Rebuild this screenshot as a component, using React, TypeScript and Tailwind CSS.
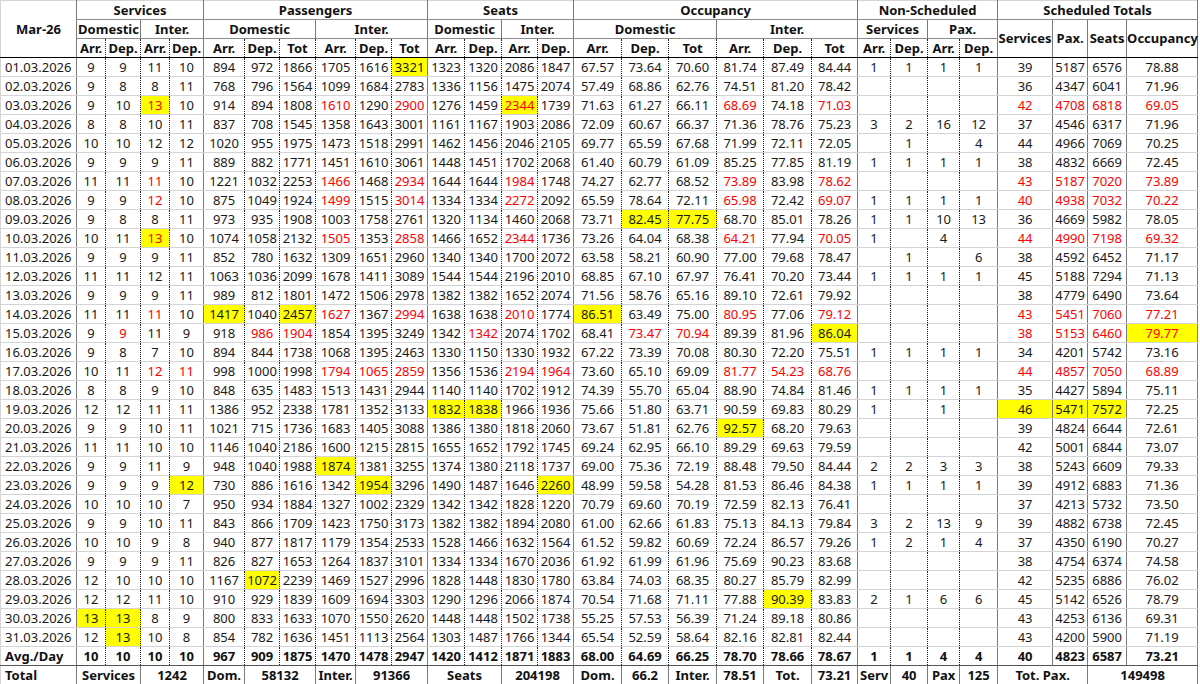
import React from "react";

const W = [76,29,35,29,34,41,35,36,40,36,36,37,37,36,36,48,47,48,47,48,46,33,37,32,38,55,35,39,71];
const GROUP_END = new Set([0,4,10,14,20,24,25,26,27,28]);

const raw = `01|9,9,11,10|894,972,1866,1705,1616,y3321|1323,1320,2086,1847|67.57,73.64,70.60,81.74,87.49,84.44|1,1,1,1|39,5187,6576,78.88
02|9,8,8,11|768,796,1564,1099,1684,2783|1336,1156,1475,2074|57.49,68.86,62.76,74.51,81.20,78.42|,,,|36,4347,6041,71.96
03|9,10,yr13,10|914,894,1808,r1610,1290,r2900|1276,1459,yr2344,1739|71.63,61.27,66.11,r68.69,74.18,r71.03|,,,|r42,r4708,r6818,r69.05
04|8,8,10,11|837,708,1545,1358,1643,3001|1161,1167,1903,2086|72.09,60.67,66.37,71.36,78.76,75.23|3,2,16,12|37,4546,6317,71.96
05|10,10,12,12|1020,955,1975,1473,1518,2991|1462,1456,2046,2105|69.77,65.59,67.68,71.99,72.11,72.05|,1,,4|44,4966,7069,70.25
06|9,9,9,11|889,882,1771,1451,1610,3061|1448,1451,1702,2068|61.40,60.79,61.09,85.25,77.85,81.19|1,1,1,1|38,4832,6669,72.45
07|11,11,r11,10|1221,1032,2253,r1466,1468,r2934|1644,1644,r1984,1748|74.27,62.77,68.52,r73.89,83.98,r78.62|,,,|r43,r5187,r7020,r73.89
08|9,9,r12,10|875,1049,1924,r1499,1515,r3014|1334,1334,r2272,2092|65.59,78.64,72.11,r65.98,72.42,r69.07|1,1,1,1|r40,r4938,r7032,r70.22
09|9,8,8,11|973,935,1908,1003,1758,2761|1320,1134,1460,2068|73.71,y82.45,y77.75,68.70,85.01,78.26|1,1,10,13|36,4669,5982,78.05
10|10,11,yr13,10|1074,1058,2132,r1505,1353,r2858|1466,1652,r2344,1736|73.26,64.04,68.38,r64.21,77.94,r70.05|1,,4,|r44,r4990,r7198,r69.32
11|9,9,9,11|852,780,1632,1309,1651,2960|1340,1340,1700,2072|63.58,58.21,60.90,77.00,79.68,78.47|,1,,6|38,4592,6452,71.17
12|11,11,12,11|1063,1036,2099,1678,1411,3089|1544,1544,2196,2010|68.85,67.10,67.97,76.41,70.20,73.44|1,1,1,1|45,5188,7294,71.13
13|9,9,9,11|989,812,1801,1472,1506,2978|1382,1382,1652,2074|71.56,58.76,65.16,89.10,72.61,79.92|,,,|38,4779,6490,73.64
14|11,11,r11,10|y1417,1040,y2457,r1627,1367,r2994|1638,1638,r2010,1774|y86.51,63.49,75.00,r80.95,77.06,r79.12|,,,|r43,r5451,r7060,r77.21
15|9,r9,11,9|918,r986,r1904,1854,1395,3249|1342,r1342,2074,1702|68.41,r73.47,r70.94,89.39,81.96,y86.04|,,,|r38,r5153,r6460,yr79.77
16|9,8,7,10|894,844,1738,1068,1395,2463|1330,1150,1330,1932|67.22,73.39,70.08,80.30,72.20,75.51|1,1,1,1|34,4201,5742,73.16
17|10,11,r12,r11|998,1000,1998,r1794,r1065,r2859|1356,1536,r2194,r1964|73.60,65.10,69.09,r81.77,r54.23,r68.76|,,,|r44,r4857,r7050,r68.89
18|8,8,9,10|848,635,1483,1513,1431,2944|1140,1140,1702,1912|74.39,55.70,65.04,88.90,74.84,81.46|1,1,1,1|35,4427,5894,75.11
19|12,12,11,11|1386,952,2338,1781,1352,3133|y1832,y1838,1966,1936|75.66,51.80,63.71,90.59,69.83,80.29|1,,1,|y46,y5471,y7572,72.25
20|9,9,10,11|1021,715,1736,1683,1405,3088|1386,1380,1818,2060|73.67,51.81,62.76,y92.57,68.20,79.63|,,,|39,4824,6644,72.61
21|11,11,10,10|1146,1040,2186,1600,1215,2815|1655,1652,1792,1745|69.24,62.95,66.10,89.29,69.63,79.59|,,,|42,5001,6844,73.07
22|9,9,11,9|948,1040,1988,y1874,1381,3255|1374,1380,2118,1737|69.00,75.36,72.19,88.48,79.50,84.44|2,2,3,3|38,5243,6609,79.33
23|9,9,9,y12|730,886,1616,1342,y1954,3296|1490,1487,1646,y2260|48.99,59.58,54.28,81.53,86.46,84.38|1,1,1,1|39,4912,6883,71.36
24|10,10,10,7|950,934,1884,1327,1002,2329|1342,1342,1828,1220|70.79,69.60,70.19,72.59,82.13,76.41|,,,|37,4213,5732,73.50
25|9,9,10,11|843,866,1709,1423,1750,3173|1382,1382,1894,2080|61.00,62.66,61.83,75.13,84.13,79.84|3,2,13,9|39,4882,6738,72.45
26|10,10,9,8|940,877,1817,1179,1354,2533|1528,1466,1632,1564|61.52,59.82,60.69,72.24,86.57,79.26|1,2,1,4|37,4350,6190,70.27
27|9,9,9,11|826,827,1653,1264,1837,3101|1334,1334,1670,2036|61.92,61.99,61.96,75.69,90.23,83.68|,,,|38,4754,6374,74.58
28|12,10,10,10|1167,y1072,2239,1469,1527,2996|1828,1448,1830,1780|63.84,74.03,68.35,80.27,85.79,82.99|,,,|42,5235,6886,76.02
29|12,12,11,10|910,929,1839,1609,1694,3303|1290,1296,2066,1874|70.54,71.68,71.11,77.88,y90.39,83.83|2,1,6,6|45,5142,6526,78.79
30|y13,y13,8,9|800,833,1633,1070,1550,2620|1448,1448,1502,1738|55.25,57.53,56.39,71.24,89.18,80.86|,,,|43,4253,6136,69.31
31|12,y13,10,8|854,782,1636,1451,1113,2564|1303,1487,1766,1344|65.54,52.59,58.64,82.16,82.81,82.44|,,,|43,4200,5900,71.19`;

const rows = raw.split("\n").map((l) => {
  const [d, ...groups] = l.split("|");
  return { date: `${d}.03.2026`, cells: groups.join(",").split(",") };
});
const avg = "10,10,10,10,967,909,1875,1470,1478,2947,1420,1412,1871,1883,68.00,64.69,66.25,78.70,78.66,78.67,1,1,4,4,40,4823,6587,73.21".split(",");

const rb = (i: number) =>
  GROUP_END.has(i) ? "border-r border-r-[#7a7a7a]" : "border-r border-r-[#222] [border-right-style:dotted]";

function Cell({ v, i }: { v: string; i: number }) {
  let bg = "";
  let color = "text-[#1a1a1a]";
  let t = v;
  if (t.startsWith("yr")) { bg = "bg-[#ffff00]"; color = "text-[#ff0000]"; t = t.slice(2); }
  else if (t.startsWith("y")) { bg = "bg-[#ffff00]"; t = t.slice(1); }
  else if (t.startsWith("r")) { color = "text-[#ff0000]"; t = t.slice(1); }
  return <td className={`h-[19px] p-0 text-center border-b border-b-[#d4d4d4] ${rb(i)} ${bg} ${color}`}>{t}</td>;
}

const H = "h-[19px] p-0 text-center font-bold text-[#111] border-b border-b-[#8a8a8a] border-r border-r-[#7a7a7a]";
const H3 = "h-[19px] p-0 text-center font-bold text-[#111] border-b border-b-black";

export default function App() {
  const sub = (labels: string[], start: number) =>
    labels.map((l, k) => <th key={start + k} className={`${H3} ${rb(start + k)}`}>{l}</th>);
  const T = "h-[19px] p-0 text-center font-bold text-[#111] border-b border-b-[#555] border-r border-r-[#7a7a7a]";
  return (
    <div className="w-[1200px] h-[684px] bg-white overflow-hidden font-['Lato','Liberation_Sans',sans-serif] text-[13px] leading-none">
      <table className="table-fixed border-collapse w-[1198px] border-t border-l border-[#d4d4d4]">
        <colgroup>{W.map((w, i) => <col key={i} style={{ width: w }} />)}</colgroup>
        <thead>
          <tr>
            <th rowSpan={3} className={`${H} border-b-black text-[13px]`}>Mar-26</th>
            <th colSpan={4} className={H}>Services</th>
            <th colSpan={6} className={H}>Passengers</th>
            <th colSpan={4} className={H}>Seats</th>
            <th colSpan={6} className={H}>Occupancy</th>
            <th colSpan={4} className={H}>Non-Scheduled</th>
            <th colSpan={4} className={H}>Scheduled Totals</th>
          </tr>
          <tr>
            <th colSpan={2} className={H}>Domestic</th>
            <th colSpan={2} className={H}>Inter.</th>
            <th colSpan={3} className={H}>Domestic</th>
            <th colSpan={3} className={H}>Inter.</th>
            <th colSpan={2} className={H}>Domestic</th>
            <th colSpan={2} className={H}>Inter.</th>
            <th colSpan={3} className={H}>Domestic</th>
            <th colSpan={3} className={H}>Inter.</th>
            <th colSpan={2} className={H}>Services</th>
            <th colSpan={2} className={H}>Pax.</th>
            <th rowSpan={2} className={`${H} border-b-black`}>Services</th>
            <th rowSpan={2} className={`${H} border-b-black`}>Pax.</th>
            <th rowSpan={2} className={`${H} border-b-black`}>Seats</th>
            <th rowSpan={2} className={`${H} border-b-black`}>Occupancy</th>
          </tr>
          <tr>
            {sub(["Arr.", "Dep.", "Arr.", "Dep."], 1)}
            {sub(["Arr.", "Dep.", "Tot", "Arr.", "Dep.", "Tot"], 5)}
            {sub(["Arr.", "Dep.", "Arr.", "Dep."], 11)}
            {sub(["Arr.", "Dep.", "Tot", "Arr.", "Dep.", "Tot"], 15)}
            {sub(["Arr.", "Dep.", "Arr.", "Dep."], 21)}
          </tr>
        </thead>
        <tbody>
          {rows.map((r) => (
            <tr key={r.date}>
              <td className="h-[19px] p-0 pl-[4px] text-left text-[#1a1a1a] border-b border-b-[#d4d4d4] border-r border-r-[#7a7a7a]">{r.date}</td>
              {r.cells.map((v, i) => <Cell key={i} v={v} i={i + 1} />)}
            </tr>
          ))}
          <tr className="font-bold">
            <td className="h-[19px] p-0 pl-[4px] text-left text-[#111] border-t border-t-black border-b border-b-[#555] border-r border-r-[#7a7a7a]">Avg./Day</td>
            {avg.map((v, i) => (
              <td key={i} className={`h-[19px] p-0 text-center text-[#111] border-t border-t-black border-b border-b-[#555] ${rb(i + 1)}`}>{v}</td>
            ))}
          </tr>
          <tr>
            <td className={`${T} text-left pl-[4px]`}>Total</td>
            <td colSpan={2} className={T}>Services</td>
            <td colSpan={2} className={T}>1242</td>
            <td className={T}>Dom.</td>
            <td colSpan={2} className={T}>58132</td>
            <td className={T}>Inter.</td>
            <td colSpan={2} className={T}>91366</td>
            <td colSpan={2} className={T}>Seats</td>
            <td colSpan={2} className={T}>204198</td>
            <td className={T}>Dom.</td>
            <td className={T}>66.2</td>
            <td className={T}>Inter.</td>
            <td className={T}>78.51</td>
            <td className={T}>Tot.</td>
            <td className={T}>73.21</td>
            <td className={T}>Serv</td>
            <td className={T}>40</td>
            <td className={T}>Pax</td>
            <td className={T}>125</td>
            <td colSpan={2} className={T}>Tot. Pax.</td>
            <td colSpan={2} className={T}>149498</td>
          </tr>
        </tbody>
      </table>
    </div>
  );
}
